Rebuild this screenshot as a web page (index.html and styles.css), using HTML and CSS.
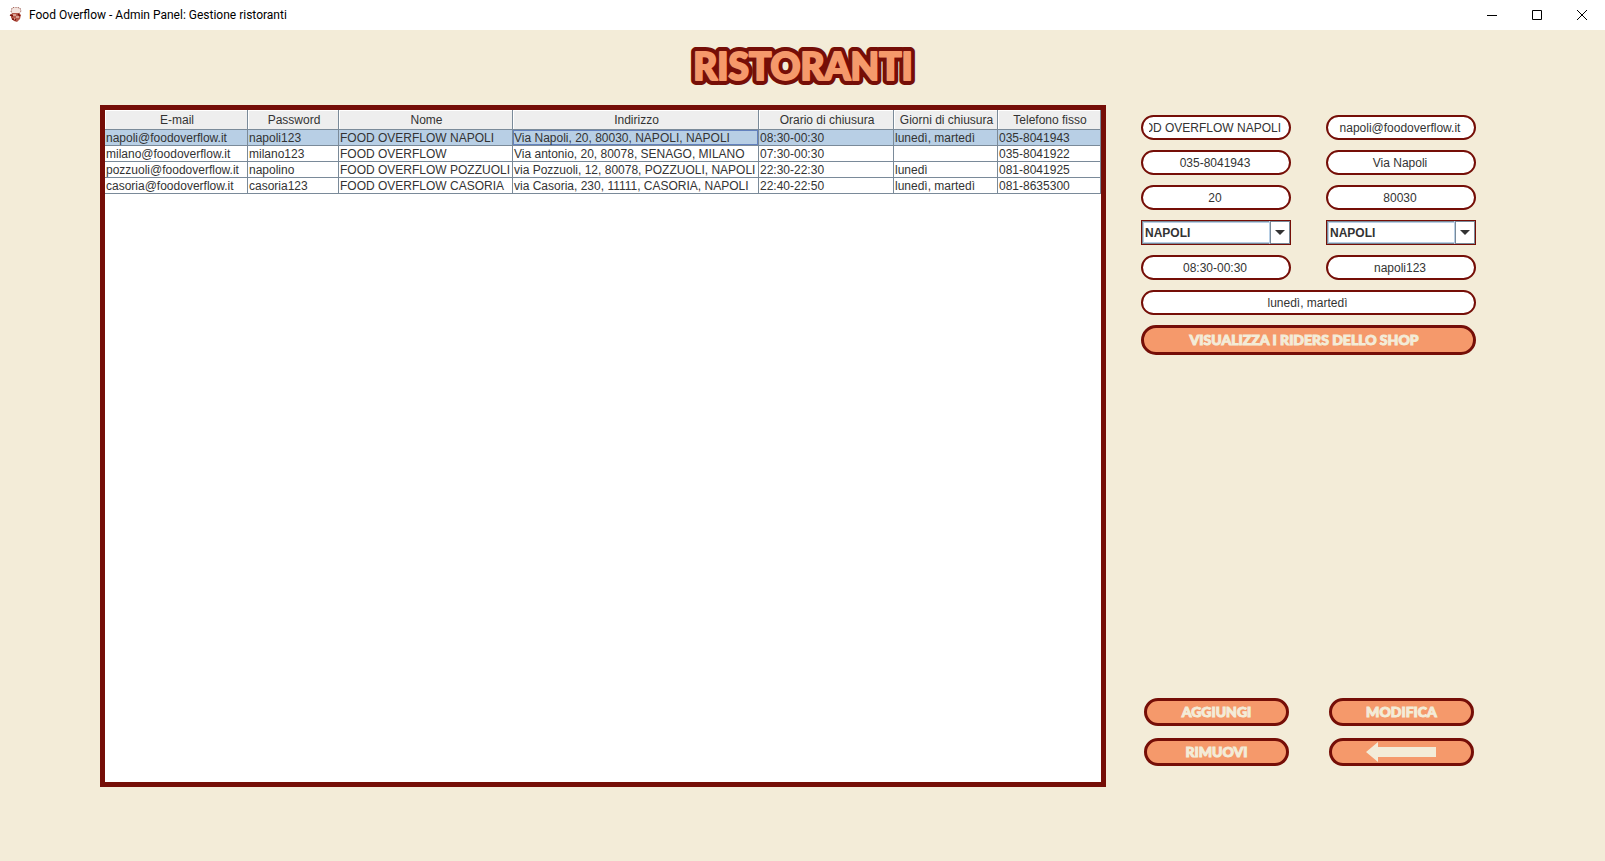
FILE: index.html
```html
<!DOCTYPE html>
<html lang="it">
<head>
<meta charset="utf-8">
<title>Food Overflow - Admin Panel: Gestione ristoranti</title>
<link rel="stylesheet" href="styles.css">
</head>
<body>
<header class="titlebar">
  <svg class="app-icon" viewBox="0 0 14 16" aria-hidden="true">
    <path d="M2 5 3 1 6 0 11 1 12 4 10 7 4 7Z" fill="#f3e3de" stroke="#8d4438" stroke-width=".8" stroke-dasharray="1.5 1"/>
    <path d="M2 7 4 6 10 6 12 8 11 12 8 15 5 14 2 11Z" fill="#b5584a"/>
    <path d="M1 8 4 9M3 12 7 13M9 7 11 9" stroke="#7a1008" stroke-width="1.5"/>
    <path d="M4 8H7M7 10H10M5 12H6" stroke="#fbe3d5" stroke-width="1.2"/>
  </svg>
  <span class="window-title">Food Overflow - Admin Panel: Gestione ristoranti</span>
  <div class="window-controls">
    <button type="button" aria-label="Riduci a icona"><svg viewBox="0 0 10 10"><path d="M0 5.500H10"/></svg></button>
    <button type="button" aria-label="Ingrandisci"><svg viewBox="0 0 10 10"><path d="M.5.5H9.500V9.500H.5Z"/></svg></button>
    <button type="button" aria-label="Chiudi"><svg viewBox="0 0 10 10"><path d="M0 0 10 10M10 0 0 10"/></svg></button>
  </div>
</header>
<main class="content">
  <h1 class="heading">
    <svg viewBox="0 0 226 40">
      <g class="heading-outline"><text id="heading-text" x="113" y="34" text-anchor="middle">RISTORANTI</text></g>
      <use class="heading-face" href="#heading-text"/>
    </svg>
  </h1>
  <div class="workspace">
    <section class="table-panel">
      <table class="shops">
        <colgroup><col class="c-email"><col class="c-password"><col class="c-name"><col class="c-address"><col class="c-hours"><col class="c-days"><col class="c-phone"></colgroup>
        <thead>
          <tr><th>E-mail</th><th>Password</th><th>Nome</th><th>Indirizzo</th><th>Orario di chiusura</th><th>Giorni di chiusura</th><th>Telefono fisso</th></tr>
        </thead>
        <tbody>
          <tr class="selected"><td>napoli@foodoverflow.it</td><td>napoli123</td><td>FOOD OVERFLOW NAPOLI</td><td class="focused">Via Napoli, 20, 80030, NAPOLI, NAPOLI</td><td>08:30-00:30</td><td>lunedì, martedì</td><td>035-8041943</td></tr>
          <tr><td>milano@foodoverflow.it</td><td>milano123</td><td>FOOD OVERFLOW</td><td>Via antonio, 20, 80078, SENAGO, MILANO</td><td>07:30-00:30</td><td></td><td>035-8041922</td></tr>
          <tr><td>pozzuoli@foodoverflow.it</td><td>napolino</td><td>FOOD OVERFLOW POZZUOLI</td><td>via Pozzuoli, 12, 80078, POZZUOLI, NAPOLI</td><td>22:30-22:30</td><td>lunedì</td><td>081-8041925</td></tr>
          <tr><td>casoria@foodoverflow.it</td><td>casoria123</td><td>FOOD OVERFLOW CASORIA</td><td>via Casoria, 230, 11111, CASORIA, NAPOLI</td><td>22:40-22:50</td><td>lunedì, martedì</td><td>081-8635300</td></tr>
        </tbody>
      </table>
    </section>
    <form class="side">
      <div class="fields">
        <input class="field field-end" type="text" aria-label="Nome" value="FOOD OVERFLOW NAPOLI">
        <input class="field" type="text" aria-label="E-mail" value="napoli@foodoverflow.it">
        <input class="field" type="text" aria-label="Telefono fisso" value="035-8041943">
        <input class="field" type="text" aria-label="Via" value="Via Napoli">
        <input class="field" type="text" aria-label="Numero civico" value="20">
        <input class="field" type="text" aria-label="CAP" value="80030">
        <div class="combo">
          <select aria-label="Provincia"><option>NAPOLI</option></select>
          <span class="combo-arrow"><svg viewBox="0 0 10 5"><path d="M0 0H10L5 5Z"/></svg></span>
        </div>
        <div class="combo">
          <select aria-label="Comune"><option>NAPOLI</option></select>
          <span class="combo-arrow"><svg viewBox="0 0 10 5"><path d="M0 0H10L5 5Z"/></svg></span>
        </div>
        <input class="field" type="text" aria-label="Orario di chiusura" value="08:30-00:30">
        <input class="field" type="text" aria-label="Password" value="napoli123">
        <input class="field wide" type="text" aria-label="Giorni di chiusura" value="lunedì, martedì">
        <button class="pill riders wide" type="button">VISUALIZZA I RIDERS DELLO SHOP</button>
      </div>
      <div class="actions">
        <button class="pill" type="button">AGGIUNGI</button>
        <button class="pill" type="button">MODIFICA</button>
        <button class="pill" type="button">RIMUOVI</button>
        <button class="pill back-button" type="button" aria-label="Indietro"><svg class="back" viewBox="0 0 70 20"><path d="M0 10 12 0V5H70V15H12V20Z"/></svg></button>
      </div>
    </form>
  </div>
</main>
</body>
</html>
```
FILE: styles.css
```css
* { box-sizing: border-box; }

body {
  margin: 0;
  min-height: 100vh;
  display: flex;
  flex-direction: column;
  background: #f3ecd8;
  color: #333;
  font: 12px/15px "Liberation Sans", Arial, sans-serif;
}

button, input, select { font: inherit; color: inherit; margin: 0; }

.titlebar {
  height: 30px;
  display: flex;
  align-items: center;
  padding: 0 1px 0 9px;
  background: #fff;
  color: #000;
}
.app-icon { width: 14px; height: 16px; margin-right: 6px; }
.window-title { flex: 1; font: 12px/16px Roboto, "Noto Sans", sans-serif; }
.window-controls { display: flex; }
.window-controls button {
  width: 45px;
  height: 28px;
  padding: 0;
  display: grid;
  place-items: center;
  border: 0;
  background: none;
}
.window-controls svg { width: 10px; height: 10px; fill: none; stroke: #000; overflow: visible; }

.content {
  flex: 1;
  display: flex;
  flex-direction: column;
  padding: 16px 129px 74px 100px;
}
.heading {
  margin: 0 0 19px 29px;
  display: flex;
  justify-content: center;
  font: 900 37px/40px Lato, sans-serif;
}
.heading svg { width: 226px; height: 40px; overflow: visible; stroke-linejoin: round; }
.heading-outline { fill: #750e07; stroke: #750e07; stroke-width: 10px; }
.heading-face { fill: #f5996b; stroke: #f5996b; stroke-width: 2px; }

.workspace { flex: 1; display: flex; gap: 35px; }
.table-panel { flex: 1; min-width: 0; border: 5px solid #750e07; background: #fff; }

.shops { width: 100%; table-layout: fixed; border-collapse: separate; border-spacing: 0; }
.c-email { width: 143px; }
.c-password { width: 91px; }
.c-name { width: 174px; }
.c-address { width: 246px; }
.c-hours { width: 135px; }
.c-days { width: 104px; }
.c-phone { width: 103px; }
.shops th, .shops td {
  padding: 1px 0 0 1px;
  border: solid #7a8a99;
  border-width: 0 1px 1px 0;
  white-space: nowrap;
  overflow: hidden;
}
.shops th {
  height: 20px;
  padding: 2px 0 0 2px;
  font-weight: normal;
  background: #eee;
  box-shadow: inset 1px 1px #fff;
}
.shops td { height: 16px; line-height: 14px; }
.selected td { background: #b8cfe5; }
.shops .focused { box-shadow: inset 0 0 0 1px #6382bf; }

.side { width: 335px; display: flex; flex-direction: column; justify-content: space-between; padding: 10px 0 21px; }
.fields { display: grid; grid-template-columns: 1fr 1fr; gap: 10px 35px; }
.wide { grid-column: span 2; }
.field {
  width: 100%;
  height: 25px;
  padding: 0 8px 0 6px;
  border: 2px solid #750e07;
  border-radius: 13px;
  background: #fff;
  text-align: center;
}
.field-end { direction: rtl; text-align: right; }

.combo {
  height: 25px;
  display: grid;
  grid-template-columns: 1fr 20px;
  border: 1px solid #750e07;
  background: #fff;
}
.combo select {
  grid-area: 1 / 1 / 2 / 3;
  width: 100%;
  padding: 1px 22px 0 2px;
  appearance: none;
  border: 1px solid #7a8a99;
  border-radius: 0;
  background: #fff;
  box-shadow: inset 0 0 0 1px #b8cfe5;
  font-weight: bold;
}
.combo-arrow {
  grid-area: 1 / 2;
  z-index: 1;
  display: grid;
  place-items: center;
  border: 1px solid #7a8a99;
  background: #fff;
  box-shadow: -1px 0 #b8cfe5;
  pointer-events: none;
}
.combo-arrow svg { width: 10px; height: 5px; fill: #333; }

.pill {
  height: 28px;
  padding: 0;
  display: grid;
  place-items: center;
  border: 3px solid #750e07;
  border-radius: 15px;
  background: #f5996b;
  color: #f3ecd8;
  font: 900 14px/20px Lato, sans-serif;
  -webkit-text-stroke: 1px #f3ecd8;
}
.riders { height: 30px; padding-right: 9px; }
.actions { display: grid; grid-template-columns: 1fr 1fr; gap: 12px 40px; padding: 0 2px 0 3px; }
.back-button { padding-right: 2px; }
.back { width: 70px; height: 20px; fill: #f3ecd8; }
```
